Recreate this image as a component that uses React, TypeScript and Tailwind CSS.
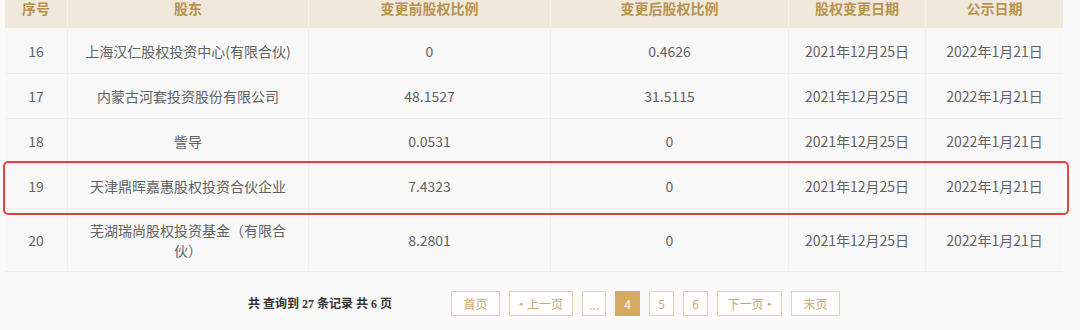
const cols = ['w-[62px]', 'w-[241px]', 'w-[242px]', 'w-[238px]', 'w-[137px]', 'w-[138px]']
const pads = ['px-[4px]', 'px-[12px]', 'px-[12px]', 'px-[12px]', 'px-[2px]', 'px-[2px]']

const headers = ['序号', '股东', '变更前股权比例', '变更后股权比例', '股权变更日期', '公示日期']

const rows = [
  { h: 'h-[46px]', cells: ['16', '上海汉仁股权投资中心(有限合伙)', '0', '0.4626', '2021年12月25日', '2022年1月21日'] },
  { h: 'h-[45px]', cells: ['17', '内蒙古河套投资股份有限公司', '48.1527', '31.5115', '2021年12月25日', '2022年1月21日'] },
  { h: 'h-[45px]', cells: ['18', '訾导', '0.0531', '0', '2021年12月25日', '2022年1月21日'] },
  { h: 'h-[45px]', cells: ['19', '天津鼎晖嘉惠股权投资合伙企业', '7.4323', '0', '2021年12月25日', '2022年1月21日'] },
  { h: 'h-[63px]', cells: ['20', '芜湖瑞尚股权投资基金（有限合伙）', '8.2801', '0', '2021年12月25日', '2022年1月21日'] },
]

const pageBtn =
  'h-[25px] flex items-center justify-center border border-[#e3d4b6] text-[12px] text-[#c8a86e] bg-white'

export default function App() {
  return (
    <div
      className="relative w-[1080px] h-[330px] overflow-hidden bg-[#fafafa]"
      style={{ fontFamily: '"Noto Sans CJK SC", "Noto Sans", sans-serif' }}
    >
      <div className="ml-[5px] w-[1058px]">
        <div className="flex h-[28px] bg-[#f1e8dc]">
          {headers.map((t, i) => (
            <div
              key={t}
              className={`${cols[i]} flex justify-center text-[14px] leading-[16px] font-bold text-[#b8924f] ${i > 0 ? 'border-l border-[#f7f1e9]' : ''}`}
            >
              {t}
            </div>
          ))}
        </div>
        {rows.map((r) => (
          <div key={r.cells[0]} className={`flex ${r.h} bg-[#f8f8f8] border-b border-[#eeeeee]`}>
            {r.cells.map((c, i) => (
              <div
                key={i}
                className={`${cols[i]} ${pads[i]} flex items-center justify-center text-center text-[14px] leading-[20px] text-[#636363] ${i > 0 ? 'border-l border-[#efefef]' : ''}`}
              >
                {c}
              </div>
            ))}
          </div>
        ))}
      </div>

      <div className="flex items-center mt-[19px] ml-[248px]">
        <div
          className="w-[203px] text-[12px] font-bold text-[#333333]"
          style={{ fontFamily: '"Liberation Serif", "Noto Sans CJK SC", serif' }}
        >
          共 查询到 27 条记录 共 6 页
        </div>
        <div className="flex gap-[9px]">
          <div className={`${pageBtn} w-[49px]`}>首页</div>
          <div className={`${pageBtn} w-[64px]`}>
            <span className="text-[7px] mr-[4px]">◂</span>上一页
          </div>
          <div className={`${pageBtn} w-[24px] pt-[3px] text-[10px]`}>...</div>
          <div className="h-[25px] w-[25px] flex items-center justify-center bg-[#d4ab5e] text-white text-[12px]">4</div>
          <div className={`${pageBtn} w-[25px]`}>5</div>
          <div className={`${pageBtn} w-[25px]`}>6</div>
          <div className={`${pageBtn} w-[65px]`}>
            下一页<span className="text-[7px] ml-[4px]">▸</span>
          </div>
          <div className={`${pageBtn} w-[49px]`}>末页</div>
        </div>
      </div>

      <div className="absolute left-[3px] top-[161px] w-[1066px] h-[54px] border-2 border-[#e0443a] rounded-[5px]" />
    </div>
  )
}
